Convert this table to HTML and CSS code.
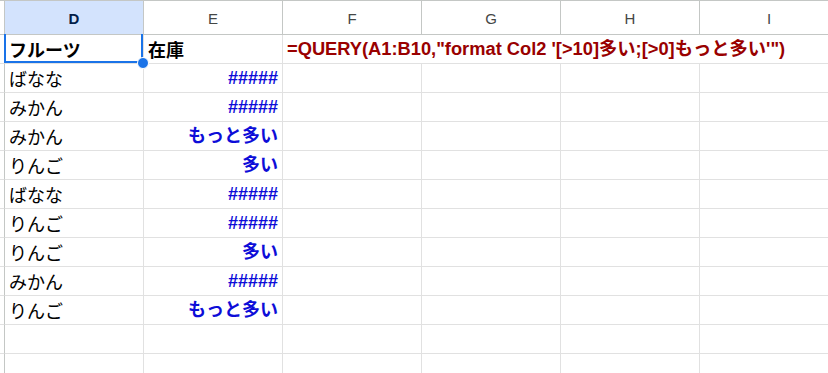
FILE: index.html
```html
<!DOCTYPE html>
<html lang="ja">
<head>
<meta charset="utf-8">
<title>Sheet</title>
<link rel="stylesheet" href="styles.css">
</head>
<body>
<div class="sheet">
  <div class="grid">
    <div class="gut hdr"></div>
    <div class="colhdr sel">D</div>
    <div class="colhdr">E</div>
    <div class="colhdr">F</div>
    <div class="colhdr">G</div>
    <div class="colhdr">H</div>
    <div class="colhdr">I</div>

    <div class="gut"></div>
    <div class="cell bold">フルーツ</div>
    <div class="cell bold">在庫</div>
    <div class="cell formula">=QUERY(A1:B10,"format Col2 '[&gt;10]多い;[&gt;0]もっと多い'")</div>

    <div class="gut"></div><div class="cell">ばなな</div><div class="cell num">#####</div><div class="cell"></div><div class="cell"></div><div class="cell"></div><div class="cell"></div>
    <div class="gut"></div><div class="cell">みかん</div><div class="cell num">#####</div><div class="cell"></div><div class="cell"></div><div class="cell"></div><div class="cell"></div>
    <div class="gut"></div><div class="cell">みかん</div><div class="cell num">もっと多い</div><div class="cell"></div><div class="cell"></div><div class="cell"></div><div class="cell"></div>
    <div class="gut"></div><div class="cell">りんご</div><div class="cell num">多い</div><div class="cell"></div><div class="cell"></div><div class="cell"></div><div class="cell"></div>
    <div class="gut"></div><div class="cell">ばなな</div><div class="cell num">#####</div><div class="cell"></div><div class="cell"></div><div class="cell"></div><div class="cell"></div>
    <div class="gut"></div><div class="cell">りんご</div><div class="cell num">#####</div><div class="cell"></div><div class="cell"></div><div class="cell"></div><div class="cell"></div>
    <div class="gut"></div><div class="cell">りんご</div><div class="cell num">多い</div><div class="cell"></div><div class="cell"></div><div class="cell"></div><div class="cell"></div>
    <div class="gut"></div><div class="cell">みかん</div><div class="cell num">#####</div><div class="cell"></div><div class="cell"></div><div class="cell"></div><div class="cell"></div>
    <div class="gut"></div><div class="cell">りんご</div><div class="cell num">もっと多い</div><div class="cell"></div><div class="cell"></div><div class="cell"></div><div class="cell"></div>
    <div class="gut"></div><div class="cell"></div><div class="cell"></div><div class="cell"></div><div class="cell"></div><div class="cell"></div><div class="cell"></div>
    <div class="gut"></div><div class="cell"></div><div class="cell"></div><div class="cell"></div><div class="cell"></div><div class="cell"></div><div class="cell"></div>
  </div>
  <div class="selection"></div>
  <div class="handle"></div>
</div>
</body>
</html>
```

FILE: styles.css
```css
html, body {
  margin: 0;
  padding: 0;
  background: #ffffff;
  overflow: hidden;
}

.sheet {
  position: relative;
  width: 828px;
  height: 373px;
  overflow: hidden;
  font-family: "Liberation Sans", Arial, "Noto Sans CJK JP", sans-serif;
}

.grid {
  display: grid;
  grid-template-columns: 5px repeat(6, 139px);
  grid-template-rows: 34px repeat(12, 29px);
  border-top: 1px solid #c4c7c5;
  width: 840px;
}

.gut {
  border-right: 1px solid #c4c7c5;
  border-bottom: 1px solid #e1e1e1;
}

.gut.hdr {
  border-bottom: 1px solid #c4c7c5;
}

.colhdr {
  display: flex;
  align-items: center;
  justify-content: center;
  border-right: 1px solid #c4c7c5;
  border-bottom: 1px solid #c4c7c5;
  font-size: 15px;
  color: #444746;
  padding-top: 1px;
}

.colhdr.sel {
  background: #d3e3fd;
  color: #041e49;
  font-weight: bold;
}

.cell {
  display: flex;
  align-items: flex-end;
  padding: 0 4px 3px 4px;
  border-right: 1px solid #e1e1e1;
  border-bottom: 1px solid #e1e1e1;
  font-size: 18px;
  line-height: 22px;
  color: #000000;
  white-space: nowrap;
  overflow: hidden;
  font-family: "Noto Sans CJK JP", sans-serif;
}

.bold {
  font-weight: bold;
}

.num {
  justify-content: flex-end;
  color: #0d0dd8;
  font-weight: bold;
  font-family: "Liberation Sans", Arial, "Noto Sans CJK JP", sans-serif;
}

.formula {
  grid-column: span 4;
  overflow: visible;
  color: #990000;
  font-weight: bold;
  font-size: 18.3px;
  font-family: "Liberation Sans", Arial, "Noto Sans CJK JP", sans-serif;
}

.selection {
  position: absolute;
  left: 4px;
  top: 34px;
  width: 139px;
  height: 29px;
  box-sizing: border-box;
  border: 2px solid #1a73e8;
  border-top: none;
}

.handle {
  position: absolute;
  left: 137px;
  top: 57px;
  width: 12px;
  height: 12px;
  box-sizing: border-box;
  border-radius: 50%;
  background: #1a73e8;
  border: 1px solid #ffffff;
}
```
